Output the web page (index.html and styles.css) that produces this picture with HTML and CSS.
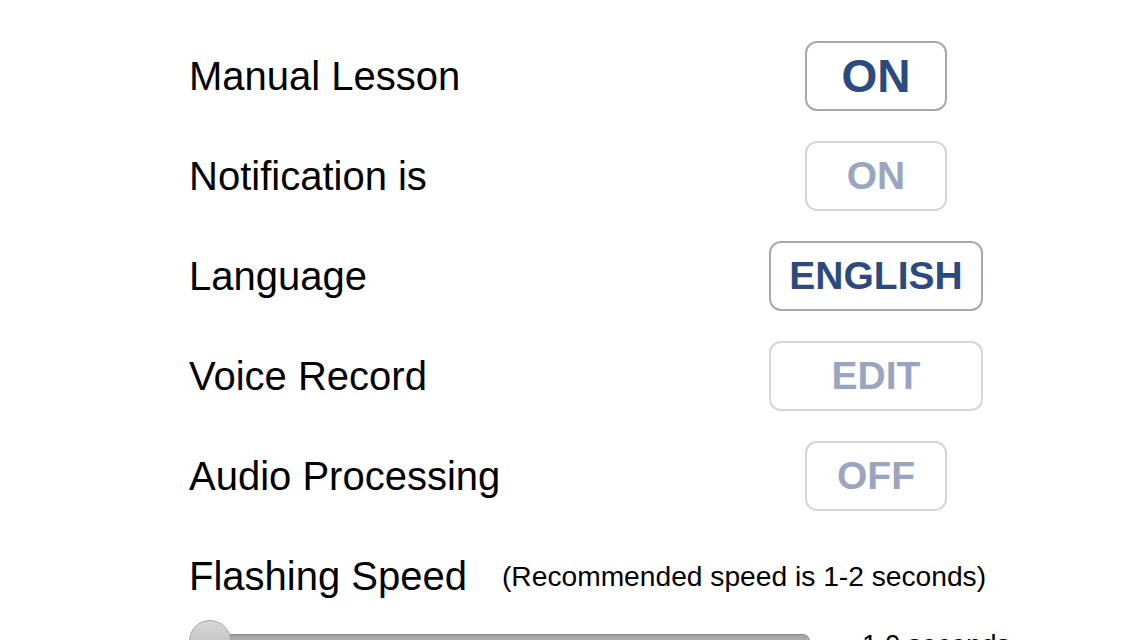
FILE: index.html
```html
<!DOCTYPE html>
<html>
<head>
<meta charset="utf-8">
<link rel="stylesheet" href="styles.css">
</head>
<body>
<div class="settings">
  <div class="row">
    <div class="label">Manual Lesson</div>
    <div class="ctl"><button class="btn btn-sm active big">ON</button></div>
  </div>
  <div class="row">
    <div class="label">Notification is</div>
    <div class="ctl"><button class="btn btn-sm dim">ON</button></div>
  </div>
  <div class="row">
    <div class="label">Language</div>
    <div class="ctl"><button class="btn btn-lg active">ENGLISH</button></div>
  </div>
  <div class="row">
    <div class="label">Voice Record</div>
    <div class="ctl"><button class="btn btn-lg dim">EDIT</button></div>
  </div>
  <div class="row">
    <div class="label">Audio Processing</div>
    <div class="ctl"><button class="btn btn-sm dim">OFF</button></div>
  </div>
  <div class="speed-row">
    <div class="label">Flashing Speed</div>
    <div class="hint">(Recommended speed is 1-2 seconds)</div>
  </div>
  <div class="slider-row">
    <div class="slider">
      <div class="track"></div>
      <div class="thumb"></div>
    </div>
    <div class="value">1.0 seconds</div>
  </div>
</div>
</body>
</html>
```
FILE: styles.css
```css
html, body {
  margin: 0;
  padding: 0;
  background: #fff;
  overflow: hidden;
}
body {
  width: 1136px;
  height: 640px;
  font-family: "Liberation Sans", Arial, Helvetica, sans-serif;
  color: #000;
}
.settings {
  padding-top: 26px;
  padding-left: 189px;
}
.row {
  display: grid;
  grid-template-columns: 557px 260px;
  height: 100px;
  align-items: center;
}
.label {
  font-size: 40px;
  line-height: 46px;
  white-space: nowrap;
}
.ctl {
  display: flex;
  justify-content: center;
}
.btn {
  box-sizing: border-box;
  height: 70px;
  border-radius: 12px;
  background: #fff;
  font-family: "Liberation Sans", Arial, Helvetica, sans-serif;
  font-weight: bold;
  font-size: 39px;
  padding: 0;
  display: flex;
  align-items: center;
  justify-content: center;
}
.btn-sm { width: 142px; }
.btn-lg { width: 214px; }
.active {
  border: 2px solid #a9a9a9;
  color: #2d4a7e;
}
.big { font-size: 46px; }
.dim {
  border: 2px solid #d6d6d6;
  color: #9aa5bf;
}
.speed-row {
  display: flex;
  align-items: center;
  height: 100px;
  gap: 35px;
}
.hint {
  font-size: 28.2px;
  white-space: nowrap;
}
.slider-row {
  display: flex;
  align-items: flex-start;
  margin-top: -6px;
}
.slider {
  position: relative;
  width: 621px;
  height: 50px;
}
.track {
  margin-top: 14px;
  margin-left: 1px;
  height: 14px;
  border-radius: 7px;
  border: 1px solid #8f8f8f;
  background: linear-gradient(#a0a0a0, #c9c9c9);
}
.thumb {
  position: absolute;
  left: 0;
  top: 0;
  width: 42px;
  height: 42px;
  border-radius: 50%;
  box-sizing: border-box;
  border: 1px solid #a8a8a8;
  background: linear-gradient(#d6d6d6, #b8b8b8);
}
.value {
  margin-left: 52px;
  font-size: 27.5px;
  line-height: 28px;
  padding-top: 11px;
  white-space: nowrap;
}
```
